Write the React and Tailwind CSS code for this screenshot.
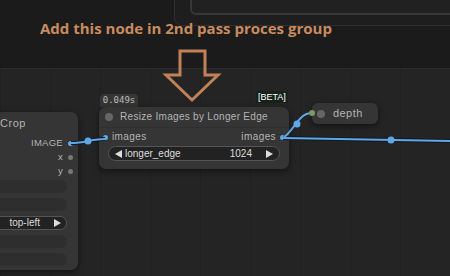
function Tri({ dir = "right" }) {
  return (
    <svg width="7" height="8" viewBox="0 0 7 8" className="shrink-0">
      {dir === "right" ? <polygon points="0,0 7,4 0,8" fill="#ddd" /> : <polygon points="7,0 0,4 7,8" fill="#ddd" />}
    </svg>
  )
}

export default function App() {
  const node = "absolute bg-[#353535] shadow-[0_2px_6px_rgba(0,0,0,0.5)]"
  const label = "font-['Liberation_Sans',Arial,sans-serif] text-[#b4b4b4] whitespace-nowrap leading-none"
  return (
    <div className="relative w-[450px] h-[276px] overflow-hidden bg-[#242424] bg-[linear-gradient(90deg,rgba(0,0,0,0.12)_1px,transparent_1px)] bg-[size:50px_50px]">
      {/* upper group area */}
      <div className="absolute left-0 top-0 w-[450px] h-[69px] bg-[#1b1b1b] border-b border-[#2c2c2c]" />
      <div className="absolute left-[174px] top-[-10px] w-[290px] h-[36px] rounded-bl-[8px] border border-[#2f2f2f] bg-[#1e1e1e]" />
      <div className="absolute left-[190px] top-[-10px] w-[270px] h-[25px] rounded-bl-[6px] border-2 border-[#383838] bg-[#212121]" />

      <div className="absolute left-[40px] top-[17px] font-['Open_Sans',sans-serif] font-bold text-[15px] text-[#c98b5f] whitespace-nowrap">
        Add this node in 2nd pass proces group
      </div>

      {/* arrow */}
      <svg className="absolute left-0 top-0" width="450" height="276">
        <polygon
          points="180,51 205,51 205,75 218,75 192,100 166,75 180,75"
          fill="none"
          stroke="#c1825a"
          strokeWidth="3"
        />
      </svg>

      {/* Crop node */}
      <div className={`${node} left-[-12px] top-[112px] w-[90px] h-[158px] rounded-[7px]`}>
        <div className={`${label} text-[11px] tracking-[0.05em] pl-[12px] h-[22px] flex items-center`}>Crop</div>
        <div className="flex flex-col items-end pr-[5px] pt-[2px]">
          {[["IMAGE", "bg-[#5fa8e8]"], ["x", "bg-[#777]"], ["y", "bg-[#777]"]].map(([t, c]) => (
            <div key={t} className="h-[14px] flex items-center gap-[5px]">
              <span className={`${label} text-[9.5px] tracking-[0.03em]`}>{t}</span>
              <span className={`w-[5px] h-[5px] rounded-full ${c}`} />
            </div>
          ))}
        </div>
        <div className="flex flex-col gap-[5px] pl-[6px] pr-[11px] pt-[2px]">
          <div className="h-[13px] rounded-full bg-[#2e2e2e]" />
          <div className="h-[13px] rounded-full bg-[#2e2e2e]" />
          <div className="h-[14px] rounded-full bg-[#222] border border-[#555] flex items-center justify-end pr-[5px] gap-[14px]">
            <span className={`${label} text-[10px] text-[#ddd]`}>top-left</span>
            <Tri />
          </div>
          <div className="h-[13px] rounded-full bg-[#2e2e2e]" />
          <div className="h-[13px] rounded-full bg-[#2e2e2e]" />
        </div>
      </div>

      {/* Resize node */}
      <div className="absolute left-[100px] top-[94px] w-[38px] h-[13px] rounded-t-[4px] bg-[#353535] flex items-center justify-center">
        <span className="font-['DejaVu_Sans_Mono',monospace] text-[9px] text-[#bbb]">0.049s</span>
      </div>
      <div className="absolute left-[256px] top-[91px] h-[12px] px-[2px] bg-[#15231a] flex items-center">
        <span className="font-['Liberation_Sans',sans-serif] text-[9px] text-white leading-none">[BETA]</span>
      </div>
      <div className={`${node} left-[99px] top-[107px] w-[190px] h-[62px] rounded-[7px]`}>
        <div className="flex items-center gap-[7px] pl-[6px] h-[21px] border-b border-[#2f2f2f]">
          <span className="w-[8px] h-[8px] rounded-full bg-[#666]" />
          <span className={`${label} text-[10px] tracking-[0.03em]`}>Resize Images by Longer Edge</span>
        </div>
        <div className="flex items-center justify-between px-[4px] h-[18px]">
          <div className="flex items-center gap-[4px]">
            <span className="w-[5px] h-[5px] rounded-full bg-[#5fa8e8]" />
            <span className={`${label} text-[10px] tracking-[0.04em]`}>images</span>
          </div>
          <div className="flex items-center gap-[4px]">
            <span className={`${label} text-[10px] tracking-[0.04em]`}>images</span>
            <span className="w-[5px] h-[5px] rounded-full bg-[#5fa8e8]" />
          </div>
        </div>
        <div className="mx-[9px] h-[15px] rounded-full bg-[#222] border border-[#555] flex items-center px-[6px]">
          <Tri dir="left" />
          <span className={`${label} text-[10px] text-[#ddd] ml-[3px]`}>longer_edge</span>
          <span className={`${label} text-[10px] text-[#ddd] ml-auto mr-[14px]`}>1024</span>
          <Tri />
        </div>
      </div>

      {/* depth node */}
      <div className={`${node} left-[312px] top-[103px] w-[66px] h-[21px] rounded-[6px] flex items-center pl-[5px] gap-[8px]`}>
        <span className="w-[8px] h-[8px] rounded-full bg-[#666]" />
        <span className={`${label} text-[11px] tracking-[0.04em]`}>depth</span>
      </div>

      {/* links */}
      <svg className="absolute left-0 top-0" width="450" height="276">
        <path d="M71 143 C 85 143, 92 139, 105 139" stroke="#101820" strokeWidth="4" fill="none" />
        <path d="M71 143 C 85 143, 92 139, 105 139" stroke="#5fa8e8" strokeWidth="2" fill="none" />
        <circle cx="88" cy="141" r="3.5" fill="#5fa8e8" />
        <path d="M283 138 L 450 141" stroke="#101820" strokeWidth="4" fill="none" />
        <path d="M283 138 L 450 141" stroke="#5fa8e8" strokeWidth="2" fill="none" />
        <circle cx="391" cy="140" r="3.5" fill="#5fa8e8" />
        <path d="M283 138 C 295 130, 298 113, 312 113" stroke="#5fa8e8" strokeWidth="2" fill="none" />
        <circle cx="297" cy="124" r="3.5" fill="#5fa8e8" />
        <circle cx="312" cy="113" r="3" fill="#7d9a5c" />
      </svg>
    </div>
  )
}
